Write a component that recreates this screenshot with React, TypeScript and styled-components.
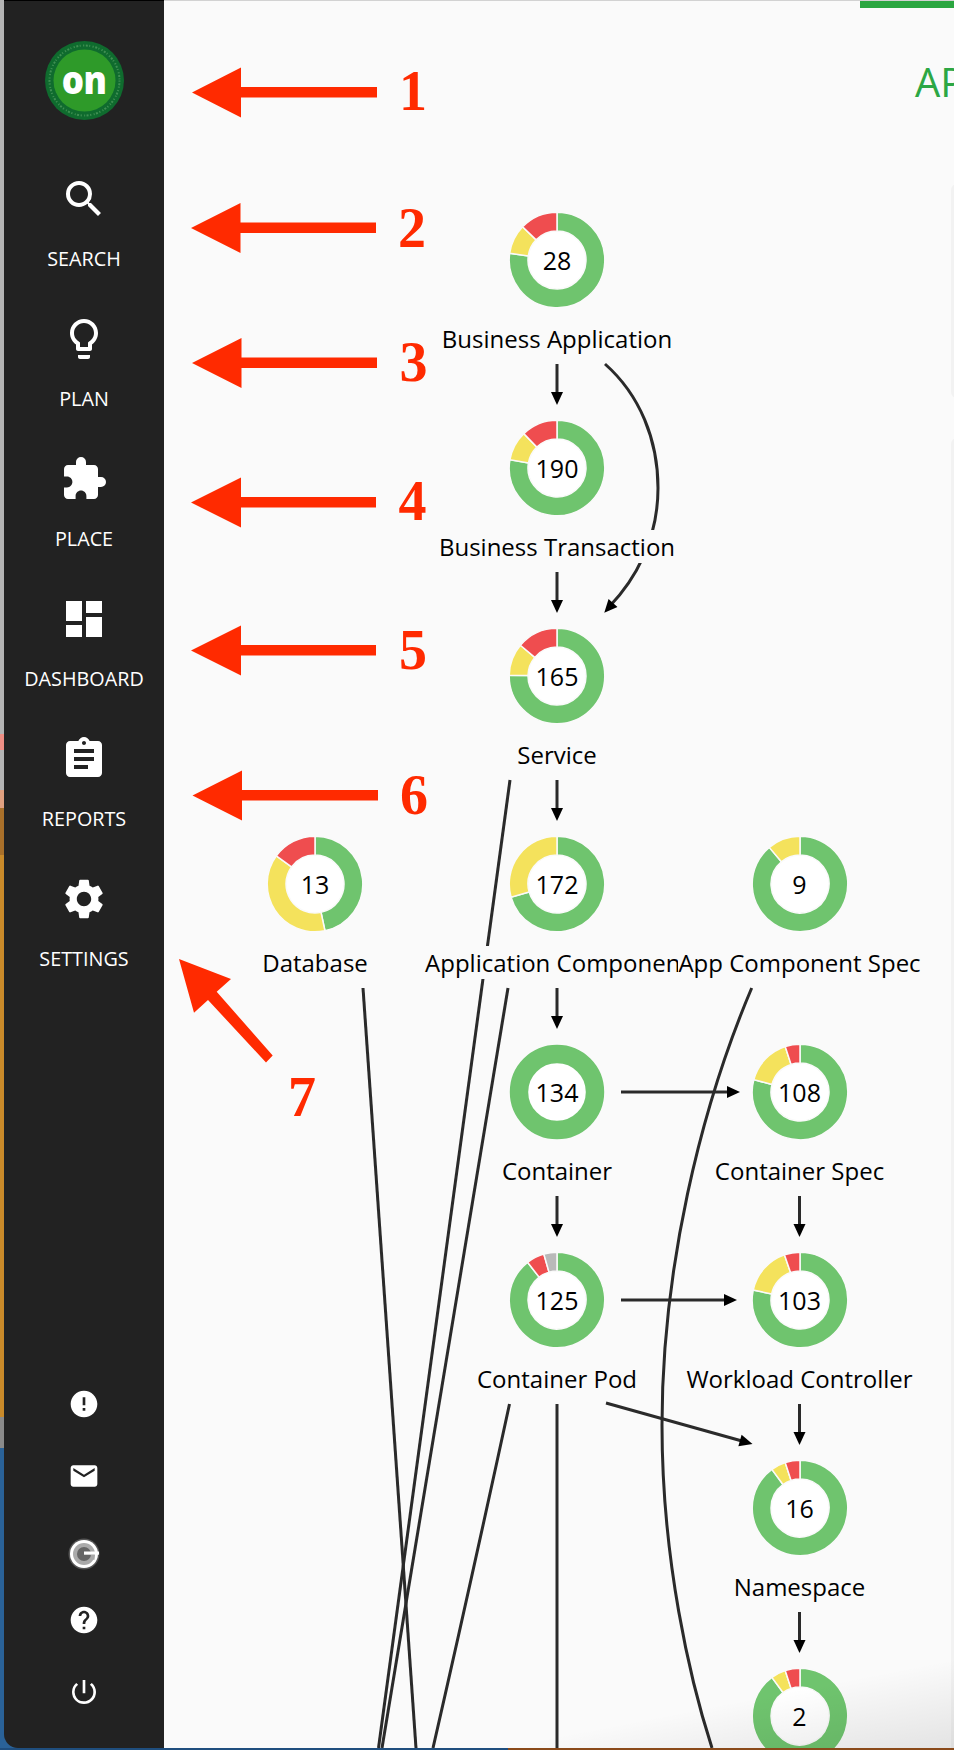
import styled, { createGlobalStyle } from 'styled-components'
import {
  MdSearch,
  MdLightbulbOutline,
  MdExtension,
  MdDashboard,
  MdAssignment,
  MdSettings,
  MdError,
  MdEmail,
  MdHelp,
  MdPowerSettingsNew,
} from 'react-icons/md'

const GREEN = '#6fc46e'
const YELLOW = '#f4e25c'
const RED = '#ef4d4f'
const GREY = '#b9b9b9'

// main panel origin in page coordinates, all canvas data below is in page coordinates
const ORIGIN_X = 164
const ORIGIN_Y = 1

type Segment = { color: string; deg: number }
type NodeData = { x: number; y: number; count: number; label: string; segments: Segment[] }

const COL_DB = 315
const COL_A = 557
const COL_B = 799.5

const nodes: NodeData[] = [
  { x: COL_A, y: 260, count: 28, label: 'Business Application', segments: [{ color: YELLOW, deg: 36 }, { color: RED, deg: 46 }] },
  { x: COL_A, y: 468, count: 190, label: 'Business Transaction', segments: [{ color: YELLOW, deg: 36 }, { color: RED, deg: 44 }] },
  { x: COL_A, y: 676, count: 165, label: 'Service', segments: [{ color: YELLOW, deg: 39 }, { color: RED, deg: 50 }] },
  { x: COL_DB, y: 884, count: 13, label: 'Database', segments: [{ color: YELLOW, deg: 138 }, { color: RED, deg: 54 }] },
  { x: COL_A, y: 884, count: 172, label: 'Application Component', segments: [{ color: YELLOW, deg: 106 }] },
  { x: COL_B, y: 884, count: 9, label: 'App Component Spec', segments: [{ color: YELLOW, deg: 40 }] },
  { x: COL_A, y: 1092, count: 134, label: 'Container', segments: [] },
  { x: COL_B, y: 1092, count: 108, label: 'Container Spec', segments: [{ color: YELLOW, deg: 57 }, { color: RED, deg: 18 }] },
  { x: COL_A, y: 1300, count: 125, label: 'Container Pod', segments: [{ color: RED, deg: 22 }, { color: GREY, deg: 16 }] },
  { x: COL_B, y: 1300, count: 103, label: 'Workload Controller', segments: [{ color: YELLOW, deg: 59 }, { color: RED, deg: 19 }] },
  { x: COL_B, y: 1508, count: 16, label: 'Namespace', segments: [{ color: YELLOW, deg: 18 }, { color: RED, deg: 18 }] },
  { x: COL_B, y: 1716, count: 2, label: '', segments: [{ color: YELLOW, deg: 18 }, { color: RED, deg: 18 }] },
]

const navItems = [
  { label: 'SEARCH', Icon: MdSearch },
  { label: 'PLAN', Icon: MdLightbulbOutline },
  { label: 'PLACE', Icon: MdExtension },
  { label: 'DASHBOARD', Icon: MdDashboard },
  { label: 'REPORTS', Icon: MdAssignment },
  { label: 'SETTINGS', Icon: MdSettings },
]

// straight edges with an arrow head [x1, y1, x2, y2]
const arrows: number[][] = [
  [COL_A, 364, COL_A, 405],
  [COL_A, 572, COL_A, 613],
  [COL_A, 780, COL_A, 821],
  [COL_A, 988, COL_A, 1029],
  [COL_A, 1196, COL_A, 1237],
  [COL_B, 1196, COL_B, 1237],
  [COL_B, 1404, COL_B, 1445],
  [COL_B, 1612, COL_B, 1653],
  [621, 1092, 740, 1092],
  [621, 1300, 737, 1300],
  [606, 1403, 752.5, 1444],
]

const lines = [
  'M605 364 C640 395 658 440 658 488 C658 540 635 580 609 607',
  'M510 780 L378.5 1748',
  'M508 988 L382 1748',
  'M363 988 L416 1748',
  'M509.5 1404 Q471 1582 433 1748',
  `M${COL_A} 1404 L${COL_A} 1748`,
  'M751.7 988 C700 1110 662 1270 662 1425 C662 1560 690 1680 712 1748',
]

// annotation arrows: tip y, head base x, shaft end x, tip x
const pointers = [
  { tip: 192, y: 92.5, base: 241, end: 377 },
  { tip: 191, y: 228, base: 240.5, end: 376 },
  { tip: 192, y: 363, base: 241.5, end: 377 },
  { tip: 191, y: 502.5, base: 241, end: 376 },
  { tip: 191, y: 650.5, base: 241, end: 376 },
  { tip: 192.5, y: 795.5, base: 242, end: 378 },
]

const numerals = [
  { n: 1, x: 413, y: 91 },
  { n: 2, x: 412, y: 228 },
  { n: 3, x: 413.5, y: 362 },
  { n: 4, x: 412.5, y: 501 },
  { n: 5, x: 413, y: 650 },
  { n: 6, x: 414, y: 795 },
  { n: 7, x: 302, y: 1097 },
]

const GlobalStyle = createGlobalStyle`
  html, body {
    margin: 0;
    padding: 0;
    background: #fafafa;
  }
`

const Page = styled.div`
  width: 954px;
  height: 1750px;
  box-sizing: border-box;
  display: flex;
  padding: 0 0 2px 4px;
  overflow: hidden;
  font-family: "Open Sans", "Liberation Sans", sans-serif;
  background:
    linear-gradient(to right, #1f4e7e 508px, #8a4a1a 508px) left bottom / 100% 2px no-repeat,
    linear-gradient(
      to bottom,
      #b4b4b4 0 734px,
      #ef8f85 734px 750px,
      #b4b4b4 750px 790px,
      #e0a080 790px 808px,
      #a9702a 808px 855px,
      #c98a2a 855px 1417px,
      #8a8a8a 1417px 1448px,
      #2a6298 1448px
    );
`

const Sidebar = styled.nav`
  width: 160px;
  flex: none;
  display: flex;
  flex-direction: column;
  align-items: center;
  box-sizing: border-box;
  padding: 40px 0 20px;
  background: #222;
  border-top: 1px solid #000;
  border-bottom-left-radius: 14px;
  color: #fff;
`

const Logo = styled.div`
  width: 79px;
  height: 79px;
  flex: none;
  position: relative;
  display: flex;
  align-items: center;
  justify-content: center;
  margin-bottom: 55px;
`

const LogoRing = styled.svg`
  position: absolute;
  inset: 0;
`

const LogoText = styled.span`
  position: relative;
  font-size: 35px;
  font-weight: 800;
  line-height: 1;
  letter-spacing: -0.5px;
  color: #fff;
  margin-top: -4px;
  transform: scaleY(1.12);
`

const NavList = styled.div`
  display: flex;
  flex-direction: column;
  align-items: center;
  gap: 44px;
`

const NavItem = styled.div`
  display: flex;
  flex-direction: column;
  align-items: center;
  height: 96px;
`

const NavLabel = styled.span`
  margin-top: 24px;
  font-size: 19.8px;
  line-height: 23px;
  color: #fff;
`

const UtilityList = styled.div`
  margin-top: auto;
  display: flex;
  flex-direction: column;
  align-items: center;
`

const UtilityRow = styled.div<{ $shift?: number }>`
  height: 72px;
  display: flex;
  align-items: center;
  justify-content: center;
  padding-top: ${(p) => p.$shift || 0}px;
  box-sizing: border-box;
`

const Main = styled.main`
  flex: 1;
  position: relative;
  overflow: hidden;
  background: #fafafa;
  border-top: 1px solid #d2d2d2;
  box-sizing: border-box;
`

const TopTab = styled.div`
  height: 7px;
  margin-left: 696px;
  background: #2ba640;
`

const Title = styled.h1`
  margin: 52px 0 0 751px;
  font-size: 40px;
  font-weight: 500;
  line-height: 44px;
  color: #2ca744;
  white-space: nowrap;
`

const SidePanel = styled.div<{ $top: number; $height: number }>`
  position: absolute;
  left: 787px;
  top: ${(p) => p.$top}px;
  width: 20px;
  height: ${(p) => p.$height}px;
  background: #f2f2f2;
  border-radius: 6px;
`

const EdgeLayer = styled.svg`
  position: absolute;
  left: 0;
  top: 0;
`

const GraphNode = styled.div<{ $x: number; $y: number }>`
  position: absolute;
  left: ${(p) => p.$x - ORIGIN_X}px;
  top: ${(p) => p.$y - ORIGIN_Y - 48}px;
  width: 0;
  display: flex;
  flex-direction: column;
  align-items: center;
`

const DonutBox = styled.div`
  position: relative;
  width: 96px;
  height: 96px;
  flex: none;
  display: flex;
  align-items: center;
  justify-content: center;
`

const DonutSvg = styled.svg`
  position: absolute;
  inset: 0;
`

const Count = styled.span`
  position: relative;
  font-size: 25px;
  line-height: 1;
  color: #000;
`

const NodeLabel = styled.span`
  margin-top: 14px;
  font-size: 24px;
  line-height: 33px;
  color: #000;
  white-space: nowrap;
  background: #fafafa;
`

const Vignette = styled.div`
  position: absolute;
  inset: 0;
  pointer-events: none;
  background: linear-gradient(169deg, rgba(0, 0, 0, 0) 95.3%, rgba(0, 0, 0, 0.09) 100%);
`

const Numeral = styled.span<{ $x: number; $y: number }>`
  position: absolute;
  left: ${(p) => p.$x - ORIGIN_X}px;
  top: ${(p) => p.$y - ORIGIN_Y}px;
  transform: translate(-50%, -50%);
  font-family: "Liberation Serif", serif;
  font-size: 56px;
  font-weight: 700;
  line-height: 1;
  color: #ff2a00;
`

const polar = (r: number, deg: number) => {
  const a = (deg * Math.PI) / 180
  return [48 + r * Math.sin(a), 48 - r * Math.cos(a)]
}

const sector = (from: number, to: number) => {
  const [x1, y1] = polar(47.8, from)
  const [x2, y2] = polar(47.8, to)
  const [x3, y3] = polar(29, to)
  const [x4, y4] = polar(29, from)
  const large = to - from > 180 ? 1 : 0
  return `M${x1} ${y1} A47.8 47.8 0 ${large} 1 ${x2} ${y2} L${x3} ${y3} A29 29 0 ${large} 0 ${x4} ${y4} Z`
}

const Donut = ({ segments }: { segments: Segment[] }) => {
  const used = segments.reduce((sum, s) => sum + s.deg, 0)
  let start = 360 - used
  return (
    <DonutSvg width={96} height={96} viewBox="0 0 96 96">
      <circle cx={48} cy={48} r={29} fill="#fff" />
      {used === 0 ? (
        <circle cx={48} cy={48} r={38} fill="none" stroke={GREEN} strokeWidth={18.4} />
      ) : (
        <path d={sector(0, start)} fill={GREEN} stroke="#fafafa" strokeWidth={1.5} />
      )}
      {segments.map((s) => {
        const d = sector(start, start + s.deg)
        start += s.deg
        return <path key={s.color} d={d} fill={s.color} stroke="#fafafa" strokeWidth={1.5} />
      })}
    </DonutSvg>
  )
}

const headPoints = (x1: number, y1: number, x2: number, y2: number) => {
  const len = Math.hypot(x2 - x1, y2 - y1)
  const ux = (x2 - x1) / len
  const uy = (y2 - y1) / len
  const bx = x2 - ux * 13
  const by = y2 - uy * 13
  return `${x2},${y2} ${bx - uy * 6},${by + ux * 6} ${bx + uy * 6},${by - ux * 6}`
}

const GrammarlyMark = () => (
  <svg width={32} height={32} viewBox="0 0 32 32">
    <circle cx={16} cy={16} r={15.5} fill="#555" />
    <circle cx={16} cy={16} r={14} fill="#fff" />
    <circle cx={16} cy={16} r={11} fill="#aaa" />
    <circle cx={16} cy={16} r={7} fill="#666" />
    <rect x={16} y={13.5} width={15} height={3.2} fill="#fff" />
    <rect x={23} y={16.7} width={3.6} height={5} fill="#aaa" />
  </svg>
)

const App = () => (
  <Page>
    <GlobalStyle />
    <Sidebar>
      <Logo>
        <LogoRing width={79} height={79} viewBox="0 0 79 79">
          <circle cx={39.5} cy={39.5} r={39.5} fill="#0f6b2e" />
          <circle cx={39.5} cy={39.5} r={35} fill="none" stroke="#3f8f52" strokeWidth={2} strokeDasharray="1.2 1.6 2 1.4 1 2.4" />
          <circle cx={39.5} cy={39.5} r={31} fill="#2e9a29" />
        </LogoRing>
        <LogoText>on</LogoText>
      </Logo>
      <NavList>
        {navItems.map(({ label, Icon }) => (
          <NavItem key={label}>
            <Icon size={48} color="#fff" />
            <NavLabel>{label}</NavLabel>
          </NavItem>
        ))}
      </NavList>
      <UtilityList>
        <UtilityRow><MdError size={32} color="#fff" /></UtilityRow>
        <UtilityRow><MdEmail size={32} color="#fff" /></UtilityRow>
        <UtilityRow $shift={12}><GrammarlyMark /></UtilityRow>
        <UtilityRow><MdHelp size={32} color="#fff" /></UtilityRow>
        <UtilityRow><MdPowerSettingsNew size={32} color="#fff" /></UtilityRow>
      </UtilityList>
    </Sidebar>

    <Main>
      <TopTab />
      <Title>AP</Title>
      <SidePanel $top={183} $height={214} />
      <SidePanel $top={437} $height={1320} />

      <EdgeLayer width={790} height={1747} viewBox={`${ORIGIN_X} ${ORIGIN_Y} 790 1747`}>
        {lines.map((d) => (
          <path key={d} d={d} fill="none" stroke="#2a2a2a" strokeWidth={3} />
        ))}
        {arrows.map(([x1, y1, x2, y2]) => (
          <g key={`${x1}-${y1}-${x2}`}>
            <line x1={x1} y1={y1} x2={x2 - ((x2 - x1) / Math.hypot(x2 - x1, y2 - y1)) * 10} y2={y2 - ((y2 - y1) / Math.hypot(x2 - x1, y2 - y1)) * 10} stroke="#2a2a2a" strokeWidth={3} />
            <polygon points={headPoints(x1, y1, x2, y2)} fill="#000" />
          </g>
        ))}
        <polygon points={headPoints(632, 582, 604.3, 612.7)} fill="#000" />
      </EdgeLayer>

      {nodes.map((node) => (
        <GraphNode key={node.count} $x={node.x} $y={node.y}>
          <DonutBox>
            <Donut segments={node.segments} />
            <Count>{node.count}</Count>
          </DonutBox>
          {node.label && <NodeLabel>{node.label}</NodeLabel>}
        </GraphNode>
      ))}

      <Vignette />

      <EdgeLayer width={790} height={1747} viewBox={`${ORIGIN_X} ${ORIGIN_Y} 790 1747`}>
        {pointers.map((p) => (
          <polygon
            key={p.y}
            fill="#ff2a00"
            points={`${p.tip},${p.y} ${p.base},${p.y - 25} ${p.base},${p.y - 5.5} ${p.end},${p.y - 5.5} ${p.end},${p.y + 5} ${p.base},${p.y + 5} ${p.base},${p.y + 25}`}
          />
        ))}
        <polygon
          fill="#ff2a00"
          points="179,959 231,979 216.7,991.7 272.7,1055.6 266,1062.5 208,1000 194,1012.7"
        />
      </EdgeLayer>
      {numerals.map((item) => (
        <Numeral key={item.n} $x={item.x} $y={item.y}>{item.n}</Numeral>
      ))}
    </Main>
  </Page>
)

export default App
